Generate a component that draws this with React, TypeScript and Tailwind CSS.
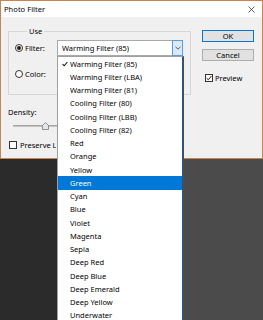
import React from "react"

const filters = [
  "Warming Filter (85)",
  "Warming Filter (LBA)",
  "Warming Filter (81)",
  "Cooling Filter (80)",
  "Cooling Filter (LBB)",
  "Cooling Filter (82)",
  "Red",
  "Orange",
  "Yellow",
  "Green",
  "Cyan",
  "Blue",
  "Violet",
  "Magenta",
  "Sepia",
  "Deep Red",
  "Deep Blue",
  "Deep Emerald",
  "Deep Yellow",
  "Underwater",
]

function Radio({ checked }: { checked?: boolean }) {
  return (
    <span className="w-[8px] h-[8px] rounded-full border border-[#333] bg-white flex items-center justify-center shrink-0">
      {checked && <span className="w-[4px] h-[4px] rounded-full bg-[#222]" />}
    </span>
  )
}

function Check({ checked }: { checked?: boolean }) {
  return (
    <span className="w-[8px] h-[8px] border border-[#333] bg-white flex items-center justify-center shrink-0">
      {checked && (
        <svg width="6" height="6" viewBox="0 0 6 6">
          <path d="M0.6 3.2 L2.3 4.8 L5.4 1" stroke="#222" strokeWidth="1" fill="none" />
        </svg>
      )}
    </span>
  )
}

export default function App() {
  const selected = "Green"

  return (
    <div className="relative w-[263px] h-[320px] overflow-hidden bg-[#4b4b4b] font-['Noto_Sans',sans-serif] text-[7.5px] text-black leading-[10px]">
      {/* Dialog */}
      <div className="h-[159px] border border-[#c8834f] bg-[#f0f0f0] flex flex-col">
        {/* Title bar */}
        <div className="h-[16px] bg-white flex items-center justify-between pl-[3px] pr-[7px]">
          <span className="text-[7.6px]">Photo Filter</span>
          <svg width="7" height="7" viewBox="0 0 7 7">
            <path d="M0.5 0.5 L6.5 6.5 M6.5 0.5 L0.5 6.5" stroke="#333" strokeWidth="0.8" />
          </svg>
        </div>

        {/* Body */}
        <div className="flex items-start pl-[7px] pt-[9px]">
          {/* Left column */}
          <div className="w-[183px] flex flex-col">
            <fieldset className="border border-[#d6d6d6] pl-[6px] pr-[7px] pb-[12px]">
              <legend className="ml-[12px] px-[2px] leading-[10px]">Use</legend>
              <div className="mt-[4px] h-[16px] flex items-center justify-between">
                <div className="flex items-center">
                  <Radio checked />
                  <span className="ml-[2px]">Filter:</span>
                </div>
                <div className="w-[126px] h-[16px] border border-[#a9a9a9] bg-white flex items-center">
                  <span className="flex-1 pl-[4px]">Warming Filter (85)</span>
                  <span className="w-[11px] h-[16px] -mr-px -my-px border border-[#569de5] bg-[#dbeaf9] flex items-center justify-center">
                    <svg width="6" height="4" viewBox="0 0 6 4">
                      <path d="M0.5 0.8 L3 3.2 L5.5 0.8" stroke="#333" strokeWidth="0.8" fill="none" />
                    </svg>
                  </span>
                </div>
              </div>
              <div className="mt-[10px] h-[16px] flex items-center">
                <Radio />
                <span className="ml-[2px]">Color:</span>
              </div>
            </fieldset>

            <span className="mt-[12px]">Density:</span>
            <div className="mt-[5px] h-[8px] relative ml-[5px] w-[50px]">
              <div className="absolute left-0 right-0 top-[3px] h-[2px] bg-[#c4c4c4] border-t border-[#a8a8a8]" />
              <svg className="absolute left-[29px] top-0" width="7" height="8" viewBox="0 0 7 8">
                <path d="M0.5 7.5 L0.5 3.5 L3.5 0.5 L6.5 3.5 L6.5 7.5 Z" fill="#e6e6e6" stroke="#7a7a7a" strokeWidth="0.8" />
              </svg>
            </div>
            <div className="mt-[10px] flex items-center ml-[1px]">
              <Check />
              <span className="ml-[3px] w-[36px] overflow-hidden whitespace-nowrap">Preserve Luminosity</span>
            </div>
          </div>

          {/* Right column */}
          <div className="ml-[11px] mt-[4px] w-[52px] flex flex-col">
            <button className="h-[12px] border border-[#0078d7] bg-[#e1e1e1] flex items-center justify-center leading-[10px]">
              OK
            </button>
            <button className="mt-[7px] h-[12px] border border-[#adadad] bg-[#e1e1e1] flex items-center justify-center leading-[10px]">
              Cancel
            </button>
            <div className="mt-[12px] ml-[3px] flex items-center">
              <Check checked />
              <span className="ml-[2px]">Preview</span>
            </div>
          </div>
        </div>
      </div>

      {/* Dark canvas below, left of the list */}
      <div className="w-[57px] h-[161px] bg-[#2b2b2b]" />

      {/* Open dropdown list */}
      <div className="absolute left-[57px] top-[56px] w-[127px] bg-white border-l border-t border-[#a0a0a0] border-r-2 border-r-[#34536f] flex flex-col">
        {filters.map((f, i) => (
          <div
            key={f}
            className={
              "h-[13.25px] flex items-center relative pl-[12px] " +
              (f === selected ? "bg-[#0078d7] text-white" : "")
            }
          >
            {i === 0 && (
              <svg className="absolute left-[4px] top-[3.5px]" width="6" height="6" viewBox="0 0 6 6">
                <path d="M0.6 3.2 L2.2 4.8 L5.4 1" stroke="#111" strokeWidth="1.1" fill="none" />
              </svg>
            )}
            <span>{f}</span>
          </div>
        ))}
      </div>
    </div>
  )
}
